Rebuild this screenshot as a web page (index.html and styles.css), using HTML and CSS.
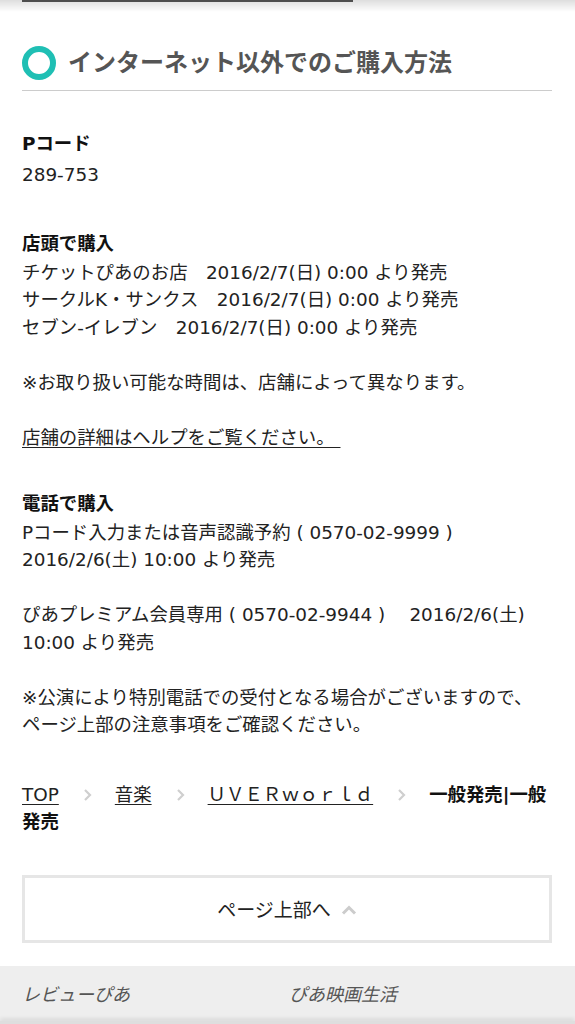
FILE: index.html
```html
<!DOCTYPE html>
<html lang="ja">
<head>
<meta charset="utf-8">
<title>インターネット以外でのご購入方法</title>
<link rel="stylesheet" href="styles.css">
</head>
<body>
<div class="top-shadow"></div>
<div class="page">
  <div class="topline"></div>
  <h2 class="heading"><span class="ring"></span><span>インターネット以外でのご購入方法</span></h2>

  <section class="sec first">
    <h3 class="sec-title">Pコード</h3>
    <p class="sec-body">289-753</p>
  </section>

  <section class="sec s2">
    <h3 class="sec-title">店頭で購入</h3>
    <p class="sec-body">チケットぴあのお店　2016/2/7(日) 0:00 より発売<br>サークルK・サンクス　2016/2/7(日) 0:00 より発売<br>セブン-イレブン　2016/2/7(日) 0:00 より発売<br><br>※お取り扱い可能な時間は、店舗によって異なります。<br><br><a class="ulink" href="#">店舗の詳細はヘルプをご覧ください。&nbsp;</a></p>
  </section>

  <section class="sec s3">
    <h3 class="sec-title">電話で購入</h3>
    <p class="sec-body">Pコード入力または音声認識予約 ( 0570-02-9999 )<br>2016/2/6(土) 10:00 より発売<br><br>ぴあプレミアム会員専用 ( 0570-02-9944 )　 2016/2/6(土) 10:00 より発売<br><br>※公演により特別電話での受付となる場合がございますので、ページ上部の注意事項をご確認ください。</p>
  </section>

  <nav class="crumbs"><a class="ulink" href="#">TOP</a><span class="chev"><svg width="10" height="14" viewBox="0 0 10 14"><path d="M2 2 L7 7 L2 12" fill="none" stroke="#cfcfcf" stroke-width="2.2"/></svg></span><a class="ulink" href="#">音楽</a><span class="chev"><svg width="10" height="14" viewBox="0 0 10 14"><path d="M2 2 L7 7 L2 12" fill="none" stroke="#cfcfcf" stroke-width="2.2"/></svg></span><a class="ulink" href="#">ＵＶＥＲｗｏｒｌｄ</a><span class="chev"><svg width="10" height="14" viewBox="0 0 10 14"><path d="M2 2 L7 7 L2 12" fill="none" stroke="#cfcfcf" stroke-width="2.2"/></svg></span><strong class="current">一般発売|一般発売</strong></nav>

  <a class="to-top" href="#">ページ上部へ<svg class="up" width="16" height="10" viewBox="0 0 16 10"><path d="M2 8.5 L8 2.5 L14 8.5" fill="none" stroke="#cccccc" stroke-width="3"/></svg></a>
</div>

<footer class="footer">
  <ul class="flinks">
    <li>レビューぴあ</li>
    <li>ぴあ映画生活</li>
    <li>トレぴあ総研</li>
    <li>ROCKぴあ</li>
  </ul>
</footer>
<div class="bottom-bar"></div>
</body>
</html>
```

FILE: styles.css
```css
html, body {
  margin: 0;
  padding: 0;
  background: #ffffff;
}
body {
  font-family: "DejaVu Sans", "Noto Sans CJK JP", sans-serif;
  color: #222222;
  font-size: 18.4px;
}
.top-shadow {
  position: fixed;
  top: 0;
  left: 0;
  right: 0;
  height: 12px;
  background: linear-gradient(to bottom, rgba(0,0,0,0.13), rgba(0,0,0,0));
  z-index: 5;
}
.bottom-bar {
  position: fixed;
  left: 0;
  right: 0;
  bottom: 0;
  height: 3px;
  background: #dedede;
  box-shadow: 0 -2px 4px rgba(0,0,0,0.12);
  z-index: 5;
}
.page {
  padding: 0 23px 0 22px;
}
.topline {
  width: 331px;
  height: 2px;
  background: #5a5a5a;
}
.heading {
  display: flex;
  align-items: center;
  gap: 12px;
  margin: 41px 0 0;
  height: 40px;
  padding-bottom: 7px;
  border-bottom: 1px solid #cccccc;
  font-size: 24px;
  font-weight: 700;
  color: #555555;
  line-height: 40px;
}
.ring {
  box-sizing: border-box;
  width: 34px;
  height: 34px;
  border-radius: 50%;
  border: 6.5px solid #1fbfb4;
  flex: none;
}
.sec.first {
  margin-top: 39px;
}
.sec.s2 {
  margin-top: 42px;
}
.sec.s3 {
  margin-top: 39px;
}
.sec-title {
  margin: 0 0 1px;
  font-size: 18.4px;
  font-weight: 700;
  line-height: 27.5px;
  color: #111111;
}
.sec.first .sec-title {
  margin-bottom: 3px;
}
.sec-body {
  margin: 0;
  padding-right: 10px;
  line-height: 27.5px;
}
.ulink {
  color: #222222;
  text-decoration: underline;
  text-underline-offset: 3px;
}
.crumbs {
  margin-top: 42px;
  line-height: 27.5px;
}
.chev {
  display: inline-block;
  width: 10px;
  margin: 0 22px 0 24px;
  vertical-align: -1px;
}
.chev svg {
  display: block;
}
.current {
  font-weight: 700;
  color: #111111;
}
.to-top {
  display: flex;
  align-items: center;
  justify-content: center;
  gap: 10px;
  box-sizing: border-box;
  height: 68px;
  margin: 39px 0 23px;
  border: 3px solid #e6e6e6;
  color: #222222;
  text-decoration: none;
  font-size: 19px;
}
.to-top .up {
  display: block;
  margin-top: 2px;
}
.footer {
  background: #eeeeee;
  padding: 11px 0 0 22px;
  height: 60px;
  overflow: hidden;
}
.flinks {
  list-style: none;
  margin: 0;
  padding: 0;
  display: grid;
  grid-template-columns: 267px 1fr;
  line-height: 36px;
  font-size: 18px;
  font-style: italic;
  color: #555555;
}
```
